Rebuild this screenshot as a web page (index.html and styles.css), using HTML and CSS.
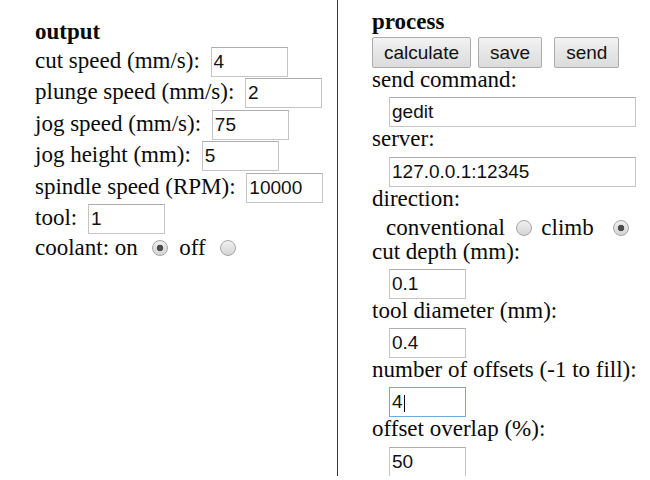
FILE: index.html
```html
<!DOCTYPE html>
<html lang="en">
<head>
    <meta charset="UTF-8">
    <title>cam settings</title>
    <link rel="stylesheet" href="styles.css">
</head>
<body>
<div class="page">
    <div class="col colOutput">
        <div class="heading">output</div>
        <div class="row">cut speed (mm/s): <input class="num" value="4"></div>
        <div class="row">plunge speed (mm/s): <input class="num" value="2"></div>
        <div class="row">jog speed (mm/s): <input class="num" value="75"></div>
        <div class="row">jog height (mm): <input class="num" value="5"></div>
        <div class="row">spindle speed (RPM): <input class="num" value="10000"></div>
        <div class="row">tool: <input class="num" value="1"></div>
        <div class="row radioRow">coolant: on <input type="radio" name="coolant" checked> off <input type="radio" name="coolant"></div>
    </div>
    <div class="col colProcess">
        <div class="heading">process</div>
        <div class="buttons">
            <button>calculate</button><button class="save">save</button><button class="send">send</button>
        </div>
        <div class="label">send command:</div>
        <input class="wide" value="gedit">
        <div class="label">server:</div>
        <input class="wide" value="127.0.0.1:12345">
        <div class="label">direction:</div>
        <div class="direction">conventional <input type="radio" name="dir"> climb <input class="last" type="radio" name="dir" checked></div>
        <div class="label">cut depth (mm):</div>
        <input class="num" value="0.1">
        <div class="label">tool diameter (mm):</div>
        <input class="num" value="0.4">
        <div class="label">number of offsets (-1 to fill):</div>
        <input class="num focused" value="4">
        <div class="label">offset overlap (%):</div>
        <input class="num" value="50">
    </div>
</div>
</body>
</html>
```

FILE: styles.css
```css
html, body {
    overflow: hidden;
}
body {
    margin: 0;
    font-family: "Liberation Serif", "Times New Roman", serif;
    font-size: 23px;
    color: #0a0a0a;
    background: #fff;
}
.page {
    display: flex;
    height: 476px;
}
.col {
    box-sizing: border-box;
}
.colOutput {
    width: 338px;
    padding: 20px 0 0 35px;
    border-right: 1px solid #3a3a3a;
}
.colProcess {
    flex: 1;
    padding: 10px 0 0 34px;
}

.heading {
    font-weight: bold;
    line-height: 24px;
}

input {
    font-family: "Liberation Sans", Arial, sans-serif;
    font-size: 19px;
    color: #111;
    box-sizing: border-box;
    height: 30px;
    margin: 0;
    padding: 0 2px;
    border: 1px solid #c4c4c4;
    border-top-color: #adadad;
    background: #fff;
    outline: none;
}
input.num {
    width: 77px;
}
input.focused {
    border-color: #72a8e2;
    background: linear-gradient(#000, #000) no-repeat 14px 7px / 1px 17px, #fff;
}

/* left column */
.colOutput .heading {
    margin-bottom: 3px;
}
.row {
    height: 31.4px;
}
.row input.num {
    margin-left: 5px;
}
.radioRow {
    height: auto;
}

input[type=radio] {
    -webkit-appearance: none;
    appearance: none;
    width: 16px;
    height: 16px;
    padding: 0;
    margin: 0 6px 0 8px;
    border: 1px solid #a6a6a6;
    border-radius: 50%;
    background: linear-gradient(#f0f0f0, #d4d4d4);
    vertical-align: -1px;
}
input[type=radio]:checked {
    background: radial-gradient(circle, #4d4d4d 0, #4d4d4d 3px, transparent 3.6px), linear-gradient(#f0f0f0, #d4d4d4);
}

/* right column */
.buttons {
    margin-top: 3px;
    height: 31px;
}
button {
    font-family: "Liberation Sans", Arial, sans-serif;
    font-size: 19px;
    color: #111;
    height: 31px;
    margin: 0;
    padding: 0 11px;
    border: 1px solid #acacac;
    border-radius: 2px;
    background: linear-gradient(#f3f3f3, #e6e6e6 50%, #dcdcdc);
    vertical-align: top;
}
button.save {
    margin-left: 7px;
}
button.send {
    margin-left: 12px;
}
.label {
    line-height: 24px;
}
.colProcess input {
    display: block;
    margin: 5.3px 0 0 17px;
}
input.wide {
    width: 247px;
}
.direction {
    height: 29px;
    box-sizing: border-box;
    padding: 5px 0 0 14px;
    line-height: 24px;
}
.direction input[type=radio] {
    display: inline-block;
    margin: 0 4px 0 5px;
}
.direction input.last {
    margin-left: 14px;
}
```
